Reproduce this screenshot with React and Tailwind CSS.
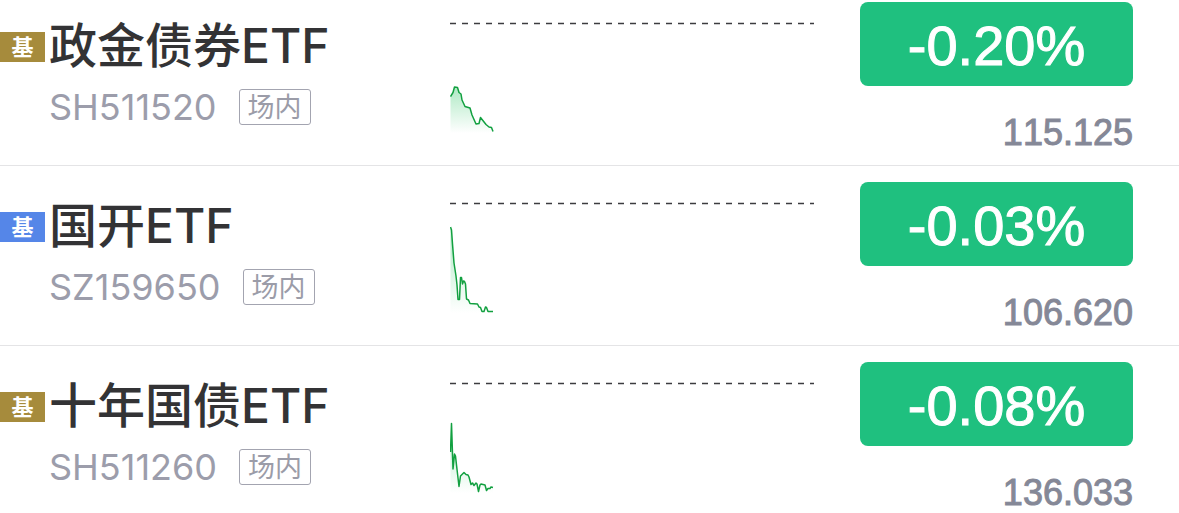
const funds = [
  {
    name: "政金债券ETF",
    code: "SH511520",
    tag: "bg-[#a68b3c]",
    change: "-0.20%",
    price: "115.125",
    points:
      "0.5,94.5 3,90.5 4.5,85 7.5,85.5 9,90.5 11,92 12,98 15,104.5 20,106 22,113 26,122 29,121.5 30.5,115.5 36,122.5 39,125 41.5,125.5 43,129.5"
  },
  {
    name: "国开ETF",
    code: "SZ159650",
    tag: "bg-[#5586e8]",
    change: "-0.03%",
    price: "106.620",
    points:
      "0.5,45 1.5,48 2.5,62 4,81 6,94 7,103 8,117.5 9.5,117.5 10.5,95.5 11.5,95.5 12.5,102 13.5,99 14.5,99.5 15.5,102 16.5,117 18.5,118 20,121.5 27.5,122 29,125 30.5,125.5 32,129.5 34,129.5 35.5,125 36.5,125.5 38,129.5 43,129.5"
  },
  {
    name: "十年国债ETF",
    code: "SH511260",
    tag: "bg-[#a68b3c]",
    change: "-0.08%",
    price: "136.033",
    points:
      "0.5,90 1.5,61.5 3,107 4.5,92 5.5,94 6.5,103 9,124.5 10.5,114 12,112.5 14,110.5 16,112.5 18,113 19,115 21,122.5 22.5,121 24,123.5 26,121 27,122 28.5,129.5 30,123 31,122 35,123 36.5,128.5 38,126.5 40,126.5 41,125 43,125.5"
  }
];

const Sparkline = ({ id, points }) => (
  <svg className="h-36 w-full" aria-hidden="true">
    <defs>
      <linearGradient id={id} x1="0" y1="0" x2="0" y2="1">
        <stop offset="0" stopColor="#35c76b" stopOpacity="0.4" />
        <stop offset="1" stopColor="#35c76b" stopOpacity="0" />
      </linearGradient>
    </defs>
    <line
      x1="0"
      y1="21.5"
      x2="100%"
      y2="21.5"
      stroke="#3c3c40"
      strokeWidth="1.5"
      strokeDasharray="6 6"
    />
    <polygon points={`0.5,131 ${points} 43,131`} fill={`url(#${id})`} />
    <polyline
      points={points}
      fill="none"
      stroke="#12a040"
      strokeWidth="1.5"
      strokeLinejoin="round"
    />
  </svg>
);

const FundRow = ({ fund }) => (
  <li className="flex items-start border-b border-[#e4e4e6] pt-4 pb-[9px] pr-[46px] first:pt-0.5 last:border-b-0 last:pb-0">
    <div className="flex w-[450px] shrink-0 items-start">
      <span
        className={`mt-[30px] flex h-[30px] w-[45px] shrink-0 items-center justify-center text-[22px] font-bold text-white ${fund.tag}`}
      >
        基
      </span>
      <div className="pl-1">
        <h2 className="mt-2 text-[48px] leading-[72px] font-medium whitespace-nowrap text-[#333335]">
          {fund.name}
        </h2>
        <div className="mt-[7px] flex items-center gap-[22px]">
          <span className="text-[36px] leading-9 text-[#9c9dab] [font-kerning:none]">{fund.code}</span>
          <span className="flex h-9 w-[72px] items-center justify-center rounded-[3px] border border-[#a3a4b0] text-[27px] leading-none text-[#9b9ca8]">
            场内
          </span>
        </div>
      </div>
    </div>

    <div className="min-w-0 flex-1 pr-[46px]">
      <Sparkline id={`fill-${fund.code}`} points={fund.points} />
    </div>

    <div className="w-[273px] shrink-0 font-['Liberation_Sans',Arial,sans-serif] [font-kerning:none]">
      <p className="flex h-[84px] items-center justify-center rounded-lg bg-[#1fc07f] pt-1 text-[56px] leading-none text-white [-webkit-text-stroke:1px_#ffffff]">
        {fund.change}
      </p>
      <p className="mt-6 text-right text-[36px] leading-[46px] text-[#858897] [-webkit-text-stroke:1px_#858897]">
        {fund.price}
      </p>
    </div>
  </li>
);

const App = () => {
  return (
    <main className="overflow-hidden bg-white font-['Inter','Noto_Sans_CJK_SC',sans-serif]" lang="zh-CN">
      <ul>
        {funds.map((fund) => (
          <FundRow key={fund.code} fund={fund} />
        ))}
      </ul>
    </main>
  );
};

export default App;
